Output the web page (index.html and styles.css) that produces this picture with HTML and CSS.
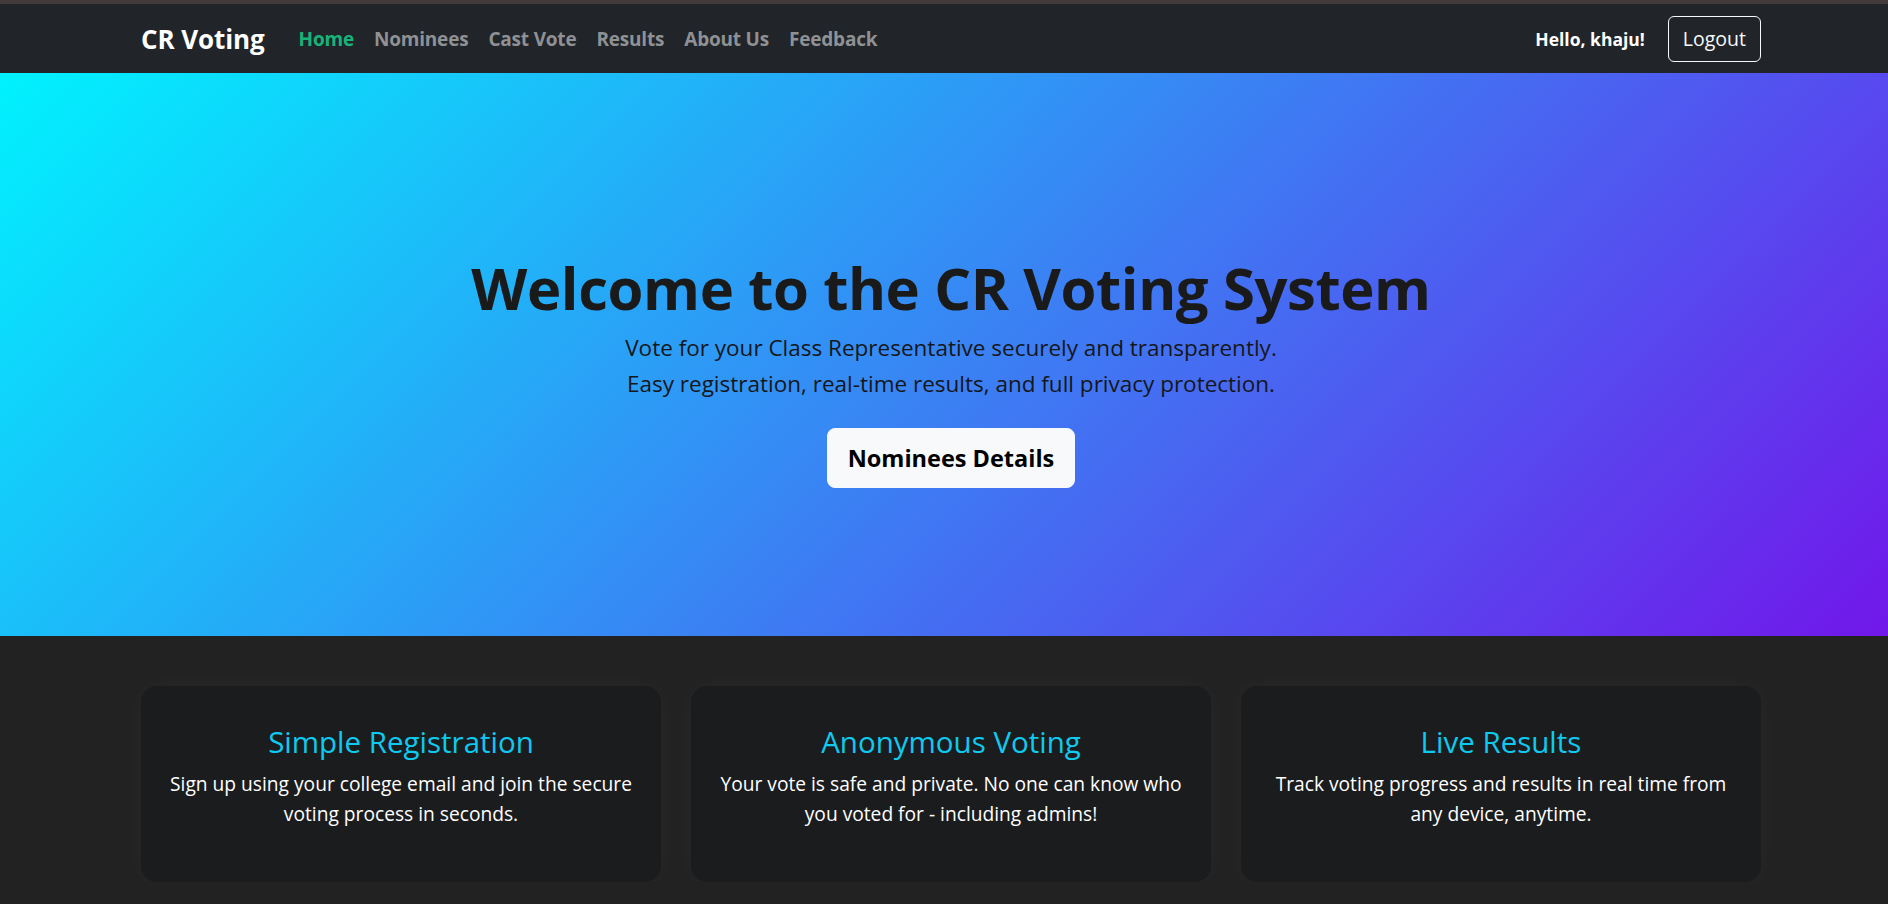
FILE: index.html
```html
<!DOCTYPE html>
<html lang="en">
<head>
<meta charset="utf-8">
<title>CR Voting</title>
<link rel="stylesheet" href="styles.css">
</head>
<body>
<div class="chrome-strip"></div>
<nav class="navbar">
  <div class="container nav-inner">
    <a class="brand" href="#">CR Voting</a>
    <ul class="nav-links">
      <li><a class="active" href="#">Home</a></li>
      <li><a href="#">Nominees</a></li>
      <li><a href="#">Cast Vote</a></li>
      <li><a href="#">Results</a></li>
      <li><a href="#">About Us</a></li>
      <li><a href="#">Feedback</a></li>
    </ul>
    <div class="nav-right">
      <span class="hello">Hello, khaju!</span>
      <button class="btn-logout">Logout</button>
    </div>
  </div>
</nav>
<header class="hero">
  <div class="container hero-inner">
    <h1 class="hero-title">Welcome to the CR Voting System</h1>
    <p class="hero-lead">Vote for your Class Representative securely and transparently.<br>Easy registration, real-time results, and full privacy protection.</p>
    <a class="btn-hero" href="#">Nominees Details</a>
  </div>
</header>
<section class="features">
  <div class="container cards">
    <div class="card">
      <h4 class="card-title">Simple Registration</h4>
      <p class="card-text">Sign up using your college email and join the secure voting process in seconds.</p>
    </div>
    <div class="card">
      <h4 class="card-title">Anonymous Voting</h4>
      <p class="card-text">Your vote is safe and private. No one can know who you voted for - including admins!</p>
    </div>
    <div class="card">
      <h4 class="card-title">Live Results</h4>
      <p class="card-text">Track voting progress and results in real time from any device, anytime.</p>
    </div>
  </div>
</section>
</body>
</html>
```
FILE: styles.css
```css
* { box-sizing: border-box; }
html, body { margin: 0; padding: 0; }
body {
  background: #222222;
  font-family: "Open Sans", "Noto Sans", sans-serif;
  color: #fff;
  overflow: hidden;
}
.chrome-strip { height: 4px; background: #433a3b; }
.container { width: 1620px; margin-left: 141px; }
.navbar { background: #212529; height: 69px; }
.nav-inner { height: 100%; display: flex; align-items: center; }
.brand {
  color: #fff; text-decoration: none; font-weight: 700; font-size: 26px;
  margin-right: 24px; letter-spacing: -0.1px;
}
.nav-links { list-style: none; margin: 0; padding: 0; display: flex; gap: 0; }
.nav-links a {
  display: block; padding: 0 10px; text-decoration: none; font-weight: 700;
  font-size: 19px; color: #8f9194; letter-spacing: -0.2px;
}
.nav-links a.active { color: #17b47a; }
.nav-right { margin-left: auto; display: flex; align-items: center; gap: 23px; }
.hello { font-weight: 700; font-size: 17.5px; color: #fff; }
.btn-logout {
  background: transparent; color: #f8f9fa; border: 1px solid #f8f9fa; border-radius: 6px;
  font-family: inherit; font-size: 19.5px; height: 46px; padding: 0 14px;
}
.hero {
  height: 563px;
  background: linear-gradient(135deg, #00f2fe 0%, #7117ea 100%);
  display: flex; align-items: center;
  padding-top: 32px;
  color: #1a1a1a;
}
.hero-inner { display: flex; flex-direction: column; align-items: center; text-align: center; }
.hero-title { margin: 0 0 8px; font-size: 58px; font-weight: 700; line-height: 1.2; letter-spacing: -0.4px; }
.hero-lead { margin: 0 0 26px; font-size: 22.5px; line-height: 36px; color: #15171a; }
.btn-hero {
  display: inline-block; background: #f8f9fa; color: #000; text-decoration: none;
  font-weight: 700; font-size: 23.5px; line-height: 38px; padding: 10px 20px;
  border-radius: 8px; border: 1px solid #f8f9fa;
}
.features { padding-top: 50px; }
.cards { display: grid; grid-template-columns: repeat(3, 1fr); gap: 30px; }
.card {
  background: #1b1c1e; border-radius: 16px; height: 196px; text-align: center;
  padding: 38px 22px 0;
  box-shadow: 0 0 22px rgba(255,255,255,0.035);
}
.card-title { margin: 0 0 10px; color: #0dcaf0; font-size: 29.5px; font-weight: 500; line-height: 1.2; }
.card-text { margin: 0; font-size: 19.2px; line-height: 30px; color: #fff; }
```
